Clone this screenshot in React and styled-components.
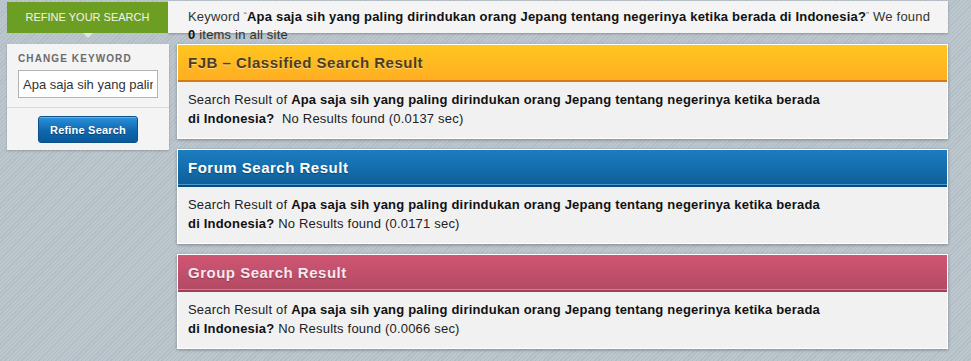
import React from "react";
import styled, { createGlobalStyle } from "styled-components";

const Global = createGlobalStyle`
  html, body { margin: 0; padding: 0; }
  body {
    width: 971px;
    height: 361px;
    overflow: hidden;
    font-family: "Liberation Sans", Arial, sans-serif;
    background-color: #b8c3ca;
    background-image: repeating-linear-gradient(
      135deg,
      #b1bcc4 0px,
      #b1bcc4 1px,
      #bcc6cd 1px,
      #bcc6cd 3px
    );
  }
`;

const Page = styled.div`
  width: 941px;
  padding: 1px 0 0 7px;
`;

const TopRow = styled.div`
  display: flex;
  height: 32px;
`;

const Tab = styled.div`
  position: relative;
  width: 161px;
  flex: none;
  margin-top: 1px;
  height: 31px;
  background: #6d9e24;
  color: #f2f5ea;
  font-size: 11px;
  line-height: 31px;
  text-align: center;
  text-transform: uppercase;
  &::after {
    content: "";
    position: absolute;
    left: 76px;
    bottom: -5px;
    border-left: 5px solid transparent;
    border-right: 5px solid transparent;
    border-top: 5px solid #dfe4e6;
  }
`;

const KeywordBar = styled.div`
  flex: 1;
  height: 32px;
  box-sizing: border-box;
  background: #f4f4f4;
  box-shadow: 0 1px 2px rgba(0, 0, 0, 0.25);
  padding: 7px 12px 0 20px;
  font-size: 13px;
  line-height: 18px;
  letter-spacing: 0.2px;
  color: #333;
`;

const B = styled.b`
  color: #111;
  font-weight: bold;
`;

const Quote = styled.span`
  font-size: 9px;
  vertical-align: top;
  line-height: 14px;
  color: #777;
`;

const ContentRow = styled.div`
  display: flex;
  align-items: flex-start;
  gap: 8px;
  margin-top: 11px;
`;

const SidePanel = styled.div`
  width: 162px;
  flex: none;
  background: #f4f4f4;
  box-shadow: 0 1px 2px rgba(0, 0, 0, 0.2);
  padding-bottom: 7px;
`;

const Label = styled.div`
  padding: 9px 0 0 11px;
  font-size: 10px;
  font-weight: bold;
  letter-spacing: 1.1px;
  color: #6a6a6a;
  line-height: 12px;
  text-transform: uppercase;
`;

const Input = styled.input`
  display: block;
  box-sizing: border-box;
  margin: 5px 0 0 11px;
  width: 140px;
  height: 28px;
  border: 1px solid #b3b3b3;
  background: #fff;
  padding: 0 4px;
  font-family: "Liberation Sans", Arial, sans-serif;
  font-size: 13px;
  color: #333;
  outline: none;
`;

const Divider = styled.div`
  height: 1px;
  background: #d9d9d9;
  margin-top: 9px;
`;

const ButtonWrap = styled.div`
  display: flex;
  justify-content: center;
  padding-top: 8px;
`;

const Button = styled.button`
  width: 100px;
  height: 27px;
  box-sizing: border-box;
  border: 1px solid #0b4f86;
  border-radius: 3px;
  background: linear-gradient(#2a92dc, #0f67ad 55%, #0a5a9c);
  color: #fff;
  font-family: "Liberation Sans", Arial, sans-serif;
  font-size: 11px;
  font-weight: bold;
  letter-spacing: 0.2px;
  text-shadow: 0 1px 0 rgba(0, 0, 0, 0.35);
  box-shadow: inset 0 1px 0 rgba(255, 255, 255, 0.3);
  padding: 0;
  cursor: pointer;
`;

const Results = styled.div`
  flex: 1;
  display: flex;
  flex-direction: column;
  gap: 10px;
`;

const themes = {
  orange: {
    bg: "linear-gradient(#ffc61f, #ffae22)",
    border: "border-bottom: 2px solid #d27b14;",
    color: "#4e3d20",
    shadow: "0 1px 0 rgba(255,255,255,0.45)",
  },
  blue: {
    bg: "linear-gradient(#1b7dc0, #0f5f99)",
    border: "border-bottom: 2px solid #0b4a7a; box-shadow: inset 0 -1px 0 #4b9bd2;",
    color: "#ffffff",
    shadow: "0 1px 1px rgba(0,0,0,0.35)",
  },
  pink: {
    bg: "linear-gradient(#d05673, #b24a64)",
    border: "border-bottom: 2px solid #9e3f57; box-shadow: inset 0 -1px 0 #e0788f;",
    color: "#f8e8ee",
    shadow: "0 1px 1px rgba(0,0,0,0.25)",
  },
};

const Panel = styled.section`
  border: 1px solid #fff;
  background: #f1f1f1;
  box-shadow: 0 1px 3px rgba(0, 0, 0, 0.3);
`;

const Header = styled.h2`
  margin: 0;
  height: 35px;
  padding-left: 10px;
  background: ${(p) => themes[p.$tone].bg};
  ${(p) => themes[p.$tone].border}
  color: ${(p) => themes[p.$tone].color};
  text-shadow: ${(p) => themes[p.$tone].shadow};
  font-size: 15px;
  font-weight: bold;
  letter-spacing: 0.5px;
  line-height: 35px;
`;

const Body = styled.div`
  height: 56px;
  box-sizing: border-box;
  padding: 8px 10px 10px 10px;
  font-size: 13px;
  line-height: 19px;
  letter-spacing: 0.2px;
  color: #222;
`;

const BodyText = styled.p`
  margin: 0;
  max-width: 640px;
`;

const KEY =
  "Apa saja sih yang paling dirindukan orang Jepang tentang negerinya ketika berada di Indonesia?";

const sections = [
  { tone: "orange", title: "FJB – Classified Search Result", sep: "\u00a0 ", time: "0.0137" },
  { tone: "blue", title: "Forum Search Result", sep: " ", time: "0.0171" },
  { tone: "pink", title: "Group Search Result", sep: " ", time: "0.0066" },
];

export default function App() {
  return (
    <>
      <Global />
      <Page>
        <TopRow>
          <Tab>Refine Your Search</Tab>
          <KeywordBar>
            Keyword <Quote>“</Quote>
            <B>{KEY}</B>
            <Quote>”</Quote> We found <B>0</B> items in all site
          </KeywordBar>
        </TopRow>
        <ContentRow>
          <SidePanel>
            <Label>Change Keyword</Label>
            <Input defaultValue={KEY} />
            <Divider />
            <ButtonWrap>
              <Button>Refine Search</Button>
            </ButtonWrap>
          </SidePanel>
          <Results>
            {sections.map((s) => (
              <Panel key={s.tone}>
                <Header $tone={s.tone}>{s.title}</Header>
                <Body>
                  <BodyText>
                    Search Result of <B>{KEY}</B>
                    {s.sep}No Results found ({s.time} sec)
                  </BodyText>
                </Body>
              </Panel>
            ))}
          </Results>
        </ContentRow>
      </Page>
    </>
  );
}
